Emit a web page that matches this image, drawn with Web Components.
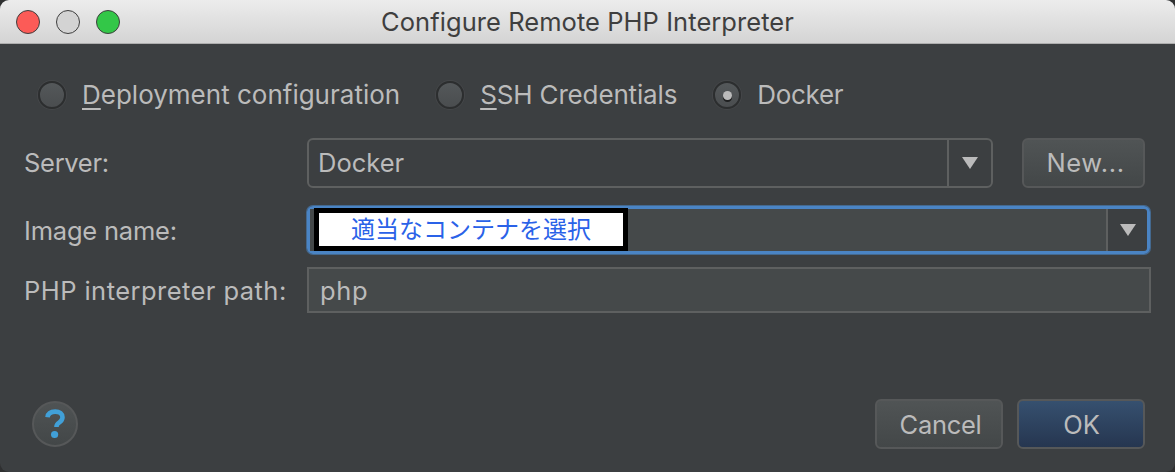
<!DOCTYPE html>
<html lang="en">
<head>
<meta charset="utf-8">
<title>Configure Remote PHP Interpreter</title>
<style>
  html, body { margin: 0; padding: 0; background: #2f3031; }
  body { width: 1175px; height: 472px; overflow: hidden; font-family: Inter, "Liberation Sans", sans-serif; }
</style>
</head>
<body>
<interpreter-dialog></interpreter-dialog>

<script>
class TitleBar extends HTMLElement {
  constructor() {
    super();
    this.attachShadow({ mode: "open" });
    this.shadowRoot.innerHTML = `
    <style>
      :host {
        display: grid;
        grid-template-columns: 1fr auto 1fr;
        align-items: center;
        height: 43px;
        border-bottom: 1px solid #aeaeae;
        background: linear-gradient(#ececec, #d4d4d4);
        color: #3f3f3f;
        font-size: 25.5px;
        letter-spacing: .06px;
      }
      .lights { display: flex; gap: 16px; padding-left: 16px; }
      .lights i { width: 24px; height: 24px; border-radius: 50%; box-sizing: border-box; border: 1px solid; }
      .close { background: #fc5b57; border-color: #e2463f; }
      .min { background: #d3d3d3; border-color: #bcbcbc; }
      .max { background: #33c748; border-color: #27aa35; }
    </style>
    <div class="lights"><i class="close"></i><i class="min"></i><i class="max"></i></div>
    <slot></slot>
    <span></span>`;
  }
}

class RadioOption extends HTMLElement {
  constructor() {
    super();
    this.attachShadow({ mode: "open" });
    this.shadowRoot.innerHTML = `
    <style>
      :host {
        display: inline-flex;
        align-items: center;
        gap: 15px;
        color: #bbbbbb;
        font-size: 26px;
      }
      .dot {
        width: 28px;
        height: 28px;
        border-radius: 50%;
        box-sizing: border-box;
        margin: 1px;
        border: 2px solid #2c2e2f;
        box-shadow: 0 0 0 1px #454749;
        background: linear-gradient(#54585a, #4a4d4f);
        display: flex;
        align-items: center;
        justify-content: center;
      }
      .dot b {
        display: none;
        width: 9px;
        height: 9px;
        border-radius: 50%;
        background: #bbbbbb;
        box-shadow: 0 2px 0 #1f2021;
      }
      :host([checked]) .dot b { display: block; }
      .text { padding-bottom: 2px; }
      ::slotted(u) { text-underline-offset: 4px; }
    </style>
    <span class="dot"><b></b></span>
    <span class="text"><slot></slot></span>`;
  }
}

class ComboBox extends HTMLElement {
  constructor() {
    super();
    this.attachShadow({ mode: "open" });
    this.shadowRoot.innerHTML = `
    <style>
      :host {
        display: flex;
        position: relative;
        box-sizing: border-box;
        border: 2px solid #5e6060;
        border-radius: 6px;
        color: #bbbbbb;
        font-size: 25.5px;
      }
      .value {
        flex: 1;
        display: flex;
        align-items: center;
        padding-left: 9px;
        padding-bottom: 2px;
      }
      .arrow {
        width: 42px;
        border-left: 2px solid #5e6060;
        display: flex;
        align-items: center;
        justify-content: center;
      }
      .arrow svg { display: block; }
      :host([focused]) {
        border: 3px solid #4a84c4;
        box-shadow: 0 0 0 1px #44698f;
      }
      :host([focused]) .value { background: #45494a; }
      :host([focused]) .arrow { width: 39px; }
    </style>
    <div class="value"><slot></slot></div>
    <div class="arrow"><svg width="16" height="12" viewBox="0 0 16 12"><path d="M0 0H16L8 12Z" fill="#bbbbbb"/></svg></div>
    <slot name="over"></slot>`;
  }
}

class TextField extends HTMLElement {
  constructor() {
    super();
    this.attachShadow({ mode: "open" });
    this.shadowRoot.innerHTML = `
    <style>
      :host {
        display: flex;
        align-items: center;
        box-sizing: border-box;
        border: 2px solid #5e6060;
        background: #45494a;
        padding-left: 11px;
        color: #bbbbbb;
        font-size: 25.5px;
      }
    </style>
    <slot></slot>`;
  }
}

class DialogButton extends HTMLElement {
  constructor() {
    super();
    this.attachShadow({ mode: "open" });
    this.shadowRoot.innerHTML = `
    <style>
      :host {
        display: flex;
        align-items: center;
        justify-content: center;
        box-sizing: border-box;
        width: 128px;
        height: 50px;
        border: 2px solid #565859;
        border-radius: 6px;
        background: linear-gradient(#505455, #434748);
        color: #bbbbbb;
        font-size: 25.5px;
      }
      :host([primary]) {
        background: linear-gradient(#36506f, #263650);
      }
    </style>
    <slot></slot>`;
  }
}

class HelpButton extends HTMLElement {
  constructor() {
    super();
    this.attachShadow({ mode: "open" });
    this.shadowRoot.innerHTML = `
    <style>
      :host {
        display: flex;
        align-items: center;
        justify-content: center;
        box-sizing: border-box;
        width: 46px;
        height: 46px;
        border: 2px solid #565859;
        border-radius: 50%;
        background: linear-gradient(#4f5354, #434748);
      }
      svg { display: block; }
    </style>
    <svg width="20" height="30" viewBox="0 0 20 30">
      <path d="M2.5 8.2C3 4.6 6 2.6 10.2 2.6c4.4 0 7.3 2.3 7.3 5.7 0 2.6-1.4 4-3.4 5.3-2 1.3-2.6 2-2.6 3.9v.6" fill="none" stroke="#41a0d8" stroke-width="4.6"/>
      <circle cx="9.6" cy="25.5" r="3.6" fill="#41a0d8"/>
    </svg>`;
  }
}

class InterpreterDialog extends HTMLElement {
  constructor() {
    super();
    this.attachShadow({ mode: "open" });
    this.shadowRoot.innerHTML = `
    <style>
      :host {
        display: flex;
        flex-direction: column;
        width: 1175px;
        height: 472px;
        overflow: hidden;
        border-radius: 9px;
        background: #3c3f41;
        color: #bbbbbb;
        font-family: Inter, "Liberation Sans", sans-serif;
        font-size: 25.5px;
      }
      .body {
        flex: 1;
        display: flex;
        flex-direction: column;
        padding: 33px 24px 23px;
      }
      .radios {
        display: flex;
        gap: 35px;
        padding-left: 13px;
        height: 36px;
        align-items: center;
      }
      form {
        display: grid;
        grid-template-columns: 283px 686px 29px 123px;
        grid-template-rows: 55px 48px 46px;
        row-gap: 13px;
        margin-top: 25px;
        align-items: stretch;
      }
      .first { margin-bottom: 5px; }
      .lbl { display: flex; align-items: center; }
      .lbl.first { padding-bottom: 2px; }
      .wide { grid-column: 2 / 5; margin-right: -6px; }
      combo-box.wide { margin-right: -5px; }
      .redact {
        position: absolute;
        left: 4px;
        top: -1px;
        width: 314px;
        height: 43px;
        box-sizing: border-box;
        border: 5px solid #000;
        background: #fff;
        color: #2a62e8;
        font: 24px/29px "Noto Sans CJK JP", sans-serif;
        padding-left: 32px;
      }
      footer {
        margin-top: auto;
        display: flex;
        align-items: center;
        gap: 14px;
        padding-left: 8px;
        padding-right: 6px;
      }
      help-button { margin-right: auto; }
    </style>
    <title-bar>Configure Remote PHP Interpreter</title-bar>
    <div class="body">
      <div class="radios">
        <radio-option><u>D</u>eployment configuration</radio-option>
        <radio-option style="letter-spacing:-.15px"><u>S</u>SH Credentials</radio-option>
        <radio-option style="letter-spacing:-.3px" checked>Docker</radio-option>
      </div>
      <form>
        <span class="lbl first" style="letter-spacing:-.3px">Server:</span>
        <combo-box class="first">Docker</combo-box>
        <span class="first"></span>
        <dialog-button class="first" style="width:123px;letter-spacing:.6px;padding:0 0 2px 4px">New...</dialog-button>
        <span class="lbl" style="letter-spacing:-.2px">Image name:</span>
        <combo-box class="wide" focused>
          <div slot="over" class="redact">適当なコンテナを選択</div>
        </combo-box>
        <span class="lbl" style="letter-spacing:.45px">PHP interpreter path:</span>
        <text-field class="wide" style="letter-spacing:.6px">php</text-field>
      </form>
      <footer>
        <help-button></help-button>
        <dialog-button style="letter-spacing:-.3px;padding-left:3px">Cancel</dialog-button>
        <dialog-button style="padding-left:1px" primary>OK</dialog-button>
      </footer>
    </div>`;
  }
}

customElements.define("title-bar", TitleBar);
customElements.define("radio-option", RadioOption);
customElements.define("combo-box", ComboBox);
customElements.define("text-field", TextField);
customElements.define("dialog-button", DialogButton);
customElements.define("help-button", HelpButton);
customElements.define("interpreter-dialog", InterpreterDialog);
</script>
</body>
</html>
